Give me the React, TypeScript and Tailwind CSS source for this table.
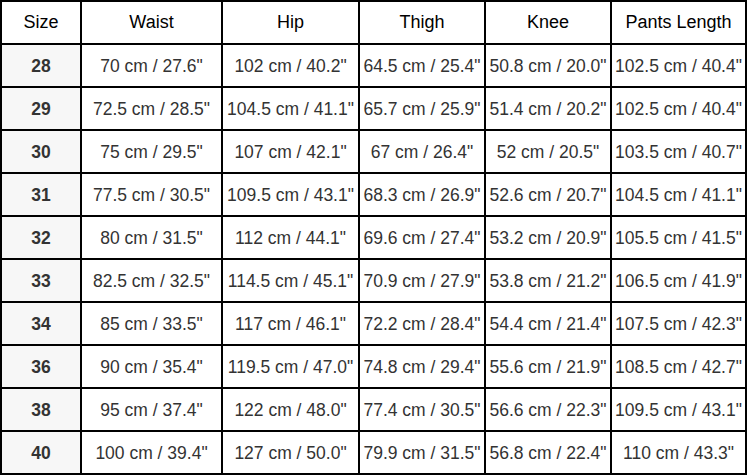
const headers = ["Size", "Waist", "Hip", "Thigh", "Knee", "Pants Length"];
const rows: string[][] = [
  ["28", '70 cm / 27.6"', '102 cm / 40.2"', '64.5 cm / 25.4"', '50.8 cm / 20.0"', '102.5 cm / 40.4"'],
  ["29", '72.5 cm / 28.5"', '104.5 cm / 41.1"', '65.7 cm / 25.9"', '51.4 cm / 20.2"', '102.5 cm / 40.4"'],
  ["30", '75 cm / 29.5"', '107 cm / 42.1"', '67 cm / 26.4"', '52 cm / 20.5"', '103.5 cm / 40.7"'],
  ["31", '77.5 cm / 30.5"', '109.5 cm / 43.1"', '68.3 cm / 26.9"', '52.6 cm / 20.7"', '104.5 cm / 41.1"'],
  ["32", '80 cm / 31.5"', '112 cm / 44.1"', '69.6 cm / 27.4"', '53.2 cm / 20.9"', '105.5 cm / 41.5"'],
  ["33", '82.5 cm / 32.5"', '114.5 cm / 45.1"', '70.9 cm / 27.9"', '53.8 cm / 21.2"', '106.5 cm / 41.9"'],
  ["34", '85 cm / 33.5"', '117 cm / 46.1"', '72.2 cm / 28.4"', '54.4 cm / 21.4"', '107.5 cm / 42.3"'],
  ["36", '90 cm / 35.4"', '119.5 cm / 47.0"', '74.8 cm / 29.4"', '55.6 cm / 21.9"', '108.5 cm / 42.7"'],
  ["38", '95 cm / 37.4"', '122 cm / 48.0"', '77.4 cm / 30.5"', '56.6 cm / 22.3"', '109.5 cm / 43.1"'],
  ["40", '100 cm / 39.4"', '127 cm / 50.0"', '79.9 cm / 31.5"', '56.8 cm / 22.4"', '110 cm / 43.3"'],
];

export default function App() {
  return (
    <div className="w-[749px] h-[475px] bg-white" style={{ fontFamily: '"Liberation Sans", Arial, sans-serif' }}>
      <div className="grid grid-cols-[80px_141px_137px_126px_126px_135px] w-[747px] border-l-2 border-t-2 border-black">
        {headers.map((h) => (
          <div key={h} className="h-[43px] border-r-2 border-b-2 border-black flex items-center justify-center text-[18px] text-black whitespace-nowrap">
            {h}
          </div>
        ))}
        {rows.map((r) =>
          r.map((c, i) => (
            <div
              key={r[0] + "-" + i}
              className={
                "h-[43px] border-r-2 border-b-2 border-black flex items-center justify-center text-[17.5px] whitespace-nowrap pt-[2px] " +
                (i === 0 ? "bg-[#f7f7f7] font-bold text-[#333333]" : "text-[#333333]")
              }
            >
              {c}
            </div>
          ))
        )}
      </div>
    </div>
  );
}
